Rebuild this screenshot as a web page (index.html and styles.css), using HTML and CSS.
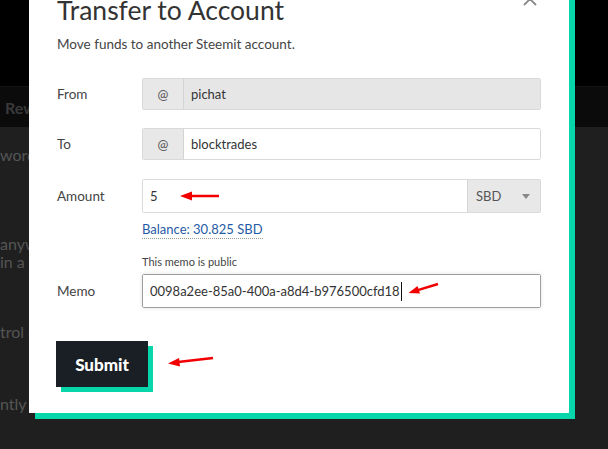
FILE: index.html
```html
<!DOCTYPE html>
<html lang="en">

<head>
  <meta charset="utf-8">
  <title>Transfer to Account</title>
  <link rel="stylesheet" href="styles.css">
</head>

<body>
  <div class="page">
    <div class="header"></div>
    <div class="nav"><span>Rewa</span></div>
    <div class="content">
      <p class="l1">words</p>
      <p class="l2">anywh</p>
      <p class="l3">in a pa</p>
      <p class="l4">trol ov</p>
      <p class="l5">ntly co</p>
    </div>
  </div>

  <div class="modal">
    <svg class="close" width="14" height="14" viewBox="0 0 14 14">
      <path d="M1 1 L13 13 M13 1 L1 13" stroke="#888" stroke-width="1.8" fill="none" />
    </svg>
    <h2>Transfer to Account</h2>
    <p class="lead">Move funds to another Steemit account.</p>

    <div class="row row-from">
      <label>From</label>
      <div class="group">
        <span class="addon">@</span>
        <span class="input disabled">pichat</span>
      </div>
    </div>

    <div class="row row-to">
      <label>To</label>
      <div class="group">
        <span class="addon">@</span>
        <span class="input">blocktrades</span>
      </div>
    </div>

    <div class="row row-amount">
      <label>Amount</label>
      <div class="group tall mark">
        <span class="input">5</span>
        <span class="select">SBD <i class="caret"></i></span>
        <svg class="arrow arrow-amount" width="44" height="12" viewBox="0 0 44 12">
          <path d="M12 6 H40" stroke="#f20000" stroke-width="2.5" />
          <path d="M1 6 L13 1.5 L13 10.5 Z" fill="#f20000" />
        </svg>
      </div>
    </div>

    <div class="row row-balance">
      <span class="spacer"></span>
      <a class="balance">Balance: 30.825 SBD</a>
    </div>

    <div class="row row-note">
      <span class="spacer"></span>
      <span class="note">This memo is public</span>
    </div>

    <div class="row row-memo">
      <label>Memo</label>
      <div class="group tall focus mark">
        <span class="input">0098a2ee-85a0-400a-a8d4-b976500cfd18<i class="cursor"></i></span>
        <svg class="arrow arrow-memo" width="32" height="12" viewBox="0 0 32 12">
          <path d="M9 8.4 L30 2" stroke="#f20000" stroke-width="2.5" />
          <path d="M0.5 11 L9.5 4 L12 11.5 Z" fill="#f20000" />
        </svg>
      </div>
    </div>

    <div class="actions">
      <button class="submit">Submit</button>
      <svg class="arrow arrow-submit" width="48" height="12" viewBox="0 0 48 12">
        <path d="M11 7 L46 3" stroke="#f20000" stroke-width="2.5" />
        <path d="M1 8.5 L12 3 L13 11.5 Z" fill="#f20000" />
      </svg>
    </div>
  </div>
</body>

</html>
```

FILE: styles.css
```css
html {
  height: 100%;
  font-family: 'Lato', 'Noto Sans', sans-serif;
}

body {
  height: inherit;
  margin: 0;
  overflow: hidden;
  background-color: #1f1f1f;
}

.page {
  height: 100%;
  display: flex;
  flex-direction: column;
}

.header {
  height: 86px;
  background-color: #000;
}

.nav {
  height: 41px;
  background-color: #0b0b0c;
  border-top: 1px solid #141414;
  box-sizing: border-box;
  display: flex;
  align-items: center;
  padding-left: 5px;
}

.nav span {
  font-weight: bold;
  font-size: 16px;
  color: #3a3a3a;
}

.content {
  flex: 1;
  background-color: #1f1f1f;
  color: #555;
  font-size: 16px;
}

.content p {
  margin: 0;
  line-height: 18px;
  white-space: nowrap;
}

.content .l1 { margin-top: 19px; }
.content .l2 { margin-top: 71px; }
.content .l3 { margin-top: 0; }
.content .l4 { margin-top: 52px; }
.content .l5 { margin-top: 54px; }

/* modal sits above the page */
.modal {
  position: absolute;
  left: 29px;
  top: -40px;
  bottom: 36px;
  width: 540px;
  box-sizing: border-box;
  padding: 33px 28px 0 28px;
  background-color: #fff;
  box-shadow: 6px 6px 0 #06d6a9;
  color: #333;
}

.close {
  position: absolute;
  right: 32px;
  top: 32px;
}

h2 {
  margin: 0;
  font-weight: 400;
  font-size: 26.5px;
  line-height: 34px;
  color: #333;
}

.lead {
  margin: 7px 0 0 0;
  font-size: 13.5px;
  line-height: 20px;
  color: #444;
}

.row {
  display: flex;
  align-items: center;
}

.row label,
.row .spacer {
  width: 85px;
  flex: none;
  font-size: 13.5px;
  color: #444;
}

.row-from { margin-top: 24px; }
.row-to { margin-top: 18px; }
.row-amount { margin-top: 19px; }
.row-balance { margin-top: 7px; }
.row-note { margin-top: 16px; }
.row-memo { margin-top: 5px; }

.group {
  flex: 1;
  display: flex;
  height: 32px;
  box-sizing: border-box;
  border: 1px solid #d9d9d9;
  border-radius: 2px;
  font-size: 13px;
  color: #333;
}

.group.tall {
  height: 34px;
}

.group.mark {
  position: relative;
}

.group.focus {
  border-color: #9e9e9e;
  box-shadow: 0 0 4px rgba(0, 0, 0, 0.12);
}

.addon {
  width: 40px;
  flex: none;
  display: flex;
  align-items: center;
  justify-content: center;
  background-color: #e8e8e8;
  border-right: 1px solid #d4d4d4;
  color: #555;
}

.input {
  flex: 1;
  display: flex;
  align-items: center;
  padding-left: 7px;
  background-color: #fff;
}

.input.disabled {
  background-color: #e6e6e6;
}

.select {
  width: 73px;
  flex: none;
  display: flex;
  align-items: center;
  justify-content: space-between;
  box-sizing: border-box;
  padding: 0 10px 0 8px;
  background-color: #e8e8e8;
  border-left: 1px solid #d4d4d4;
  color: #555;
}

.caret {
  width: 0;
  height: 0;
  border-left: 4px solid transparent;
  border-right: 4px solid transparent;
  border-top: 5px solid #888;
}

.cursor {
  display: inline-block;
  width: 1px;
  height: 19px;
  margin-left: 1px;
  background-color: #111;
}

.balance {
  font-size: 13px;
  line-height: 18px;
  color: #1f5aa6;
  border-bottom: 1px dotted #9a9a9a;
}

.note {
  font-size: 11px;
  line-height: 14px;
  color: #444;
}

.arrow {
  position: absolute;
}

.arrow-amount {
  left: 36px;
  top: 10px;
}

.arrow-memo {
  left: 265px;
  top: 7px;
}

.actions {
  margin-top: 33px;
  position: relative;
}

.submit {
  height: 46px;
  width: 92px;
  margin-left: -1px;
  border: none;
  background-color: #1a1f25;
  color: #fff;
  font-family: 'Lato', sans-serif;
  font-weight: 900;
  font-size: 17px;
  box-shadow: 5px 5px 0 #06d6a9;
}

.arrow-submit {
  left: 110px;
  top: 14px;
}
```
